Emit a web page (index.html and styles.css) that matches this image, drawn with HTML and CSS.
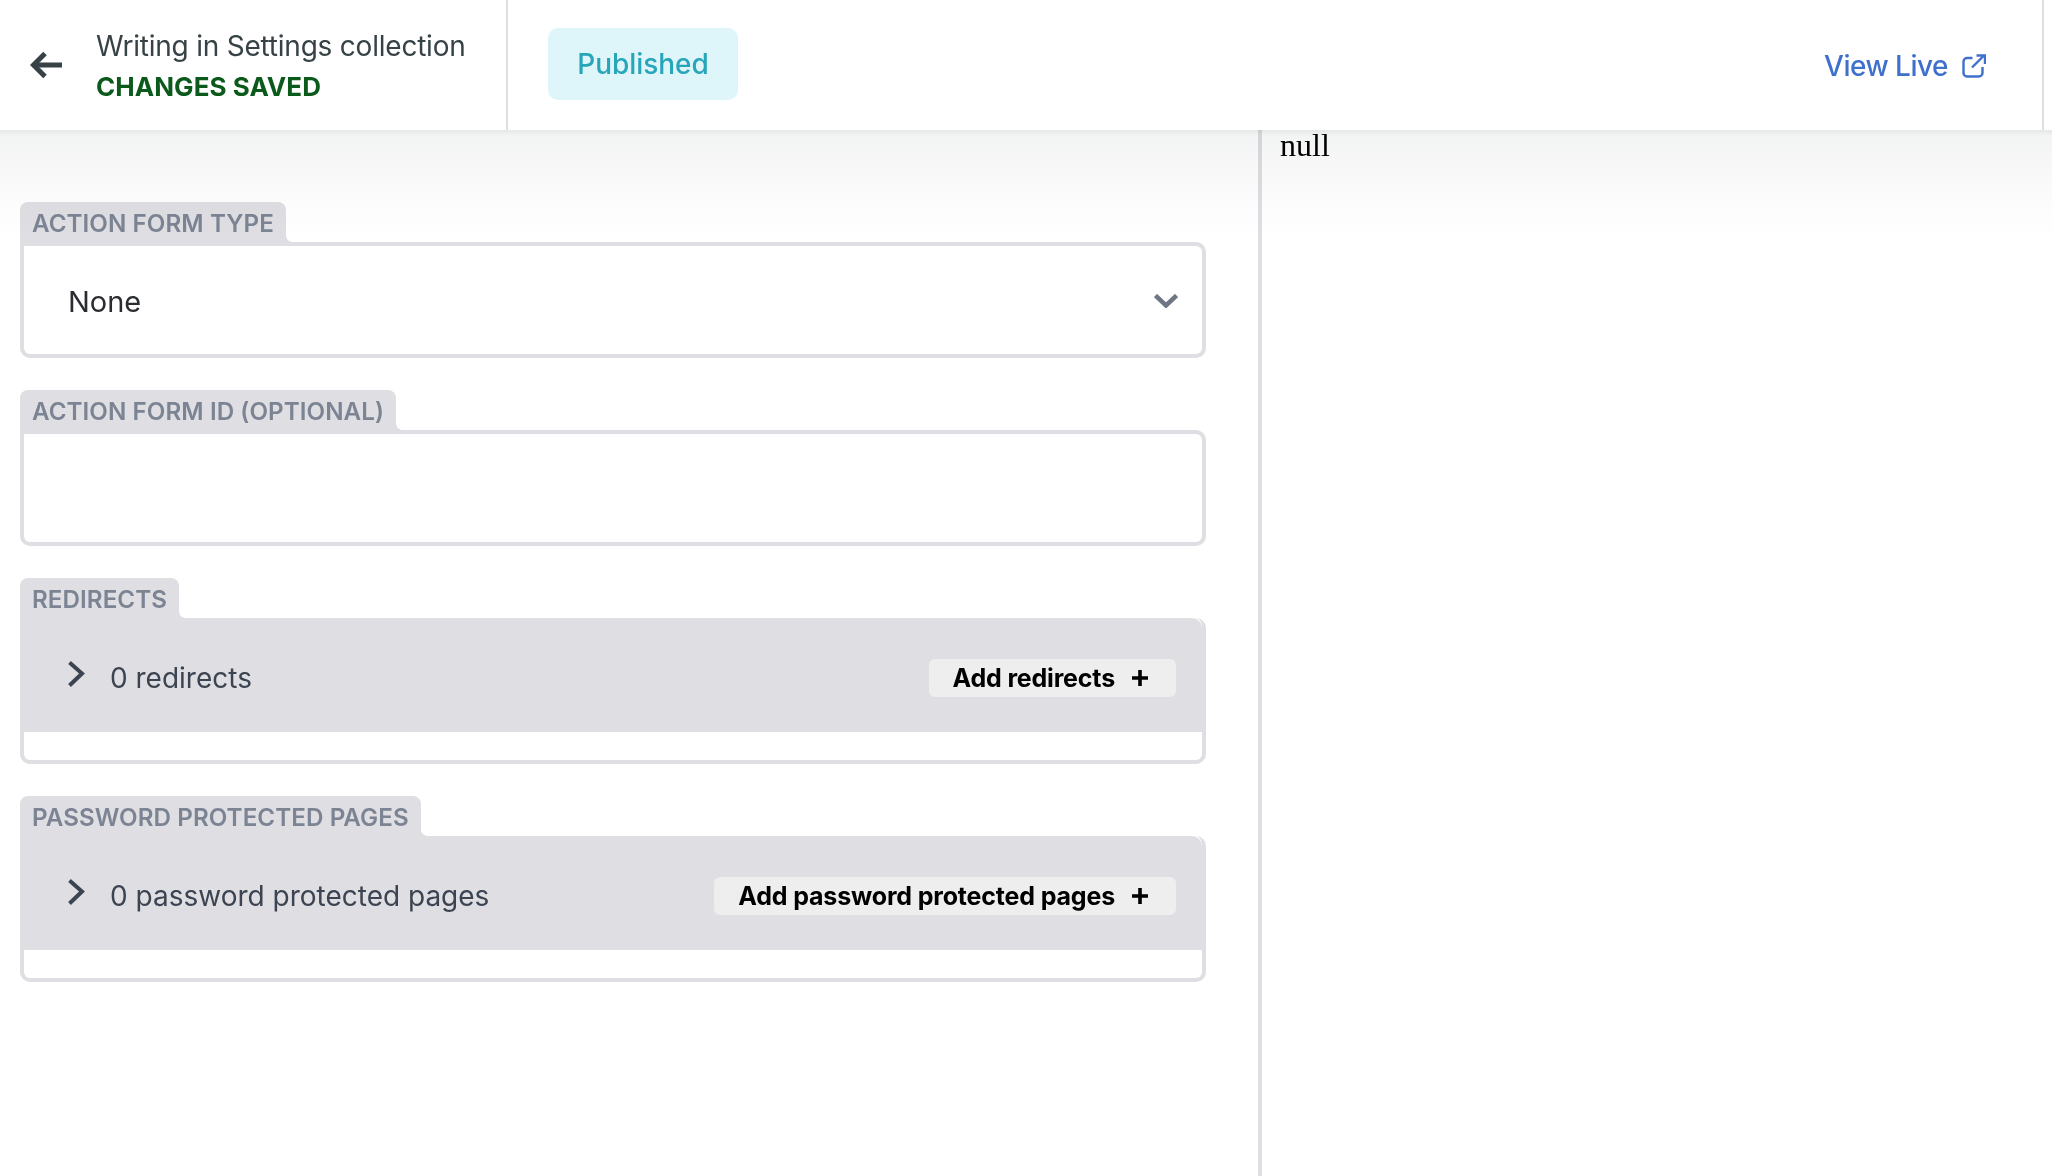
FILE: index.html
```html
<!DOCTYPE html>
<html lang="en">
<head>
<meta charset="utf-8">
<title>Writing in Settings collection</title>
<link rel="stylesheet" href="styles.css">
</head>
<body>
<header class="topbar">
  <div class="title-area">
    <svg class="back-icon" width="32" height="28" viewBox="0 0 32 28" fill="none" stroke="#374247" stroke-width="5"><path d="M32 14H4"/><path d="M15 2.500 3.500 14 15 25.500"/></svg>
    <div class="title-text">
      <div class="title">Writing in Settings collection</div>
      <div class="saved">CHANGES SAVED</div>
    </div>
  </div>
  <div class="status-area"><span class="badge">Published</span></div>
  <a class="view-live">View Live
    <svg width="24" height="24" viewBox="0 0 24 24" fill="none" stroke="#3f70cc" stroke-width="2.400"><path d="M10.500 4H5a3.500 3.500 0 0 0-3.500 3.500V19A3.500 3.500 0 0 0 5 22.500h12a3.500 3.500 0 0 0 3.500-3.500v-6"/><path d="M10 13.500 22 1.500"/><path d="M14.500 1.500H23V10"/></svg>
  </a>
</header>
<main class="main">
  <section class="form-col">
    <div class="field">
      <div class="tab">ACTION FORM TYPE</div>
      <div class="box box-select">
        <span>None</span>
        <svg width="24" height="14" viewBox="0 0 24 14" fill="none" stroke="#6e7686" stroke-width="4.500"><path d="M1.500 1.500 12 11.500 22.500 1.500"/></svg>
      </div>
    </div>
    <div class="field">
      <div class="tab">ACTION FORM ID (OPTIONAL)</div>
      <div class="box"></div>
    </div>
    <div class="field">
      <div class="tab">REDIRECTS</div>
      <div class="panel">
        <div class="panel-head">
          <svg class="chevron" width="18" height="26" viewBox="0 0 18 26" fill="none" stroke="#3c4452" stroke-width="4"><path d="M2.500 1.500 15 12.500 2.500 24.500"/></svg>
          <span class="count">0 redirects</span>
          <span class="add-btn">Add redirects
            <svg width="16" height="16" viewBox="0 0 16 16" stroke="#000" stroke-width="3.600"><path d="M8 0v16M0 8h16"/></svg>
          </span>
        </div>
      </div>
    </div>
    <div class="field">
      <div class="tab">PASSWORD PROTECTED PAGES</div>
      <div class="panel">
        <div class="panel-head">
          <svg class="chevron" width="18" height="26" viewBox="0 0 18 26" fill="none" stroke="#3c4452" stroke-width="4"><path d="M2.500 1.500 15 12.500 2.500 24.500"/></svg>
          <span class="count">0 password protected pages</span>
          <span class="add-btn">Add password protected pages
            <svg width="16" height="16" viewBox="0 0 16 16" stroke="#000" stroke-width="3.600"><path d="M8 0v16M0 8h16"/></svg>
          </span>
        </div>
      </div>
    </div>
  </section>
  <section class="preview-col">null</section>
</main>
</body>
</html>
```
FILE: styles.css
```css
* { box-sizing: border-box; }
html, body { margin: 0; height: 100%; background: #fff; }
body { font-family: Inter, "Liberation Sans", sans-serif; overflow: hidden; }

.topbar {
  position: relative;
  z-index: 2;
  height: 130px;
  display: flex;
  align-items: stretch;
  background: #fff;
  border-right: 2px solid #dfdfe3;
  margin-right: 8px;
  box-shadow: 8px 0 0 #fff;
}
.title-area {
  width: 508px;
  display: flex;
  align-items: center;
  gap: 34px;
  padding-left: 30px;
  border-right: 2px solid #dfdfe3;
}
.back-icon { flex: none; }
.title-text { padding-top: 3px; }
.title { font-size: 28px; line-height: 40px; letter-spacing: -0.22px; color: #374247; }
.saved { font-size: 26px; line-height: 41px; font-weight: 700; letter-spacing: 0.05px; color: #0b5a1c; }
.status-area { display: flex; align-items: center; padding: 0 0 2px 40px; flex: 1; }
.badge {
  display: flex;
  align-items: center;
  justify-content: center;
  width: 190px;
  height: 72px;
  border-radius: 10px;
  background: #def5f9;
  color: #27a5b9;
  font-size: 28px;
  font-weight: 500;
  letter-spacing: -0.05px;
}
.view-live {
  display: flex;
  align-items: center;
  gap: 14px;
  padding-right: 56px;
  padding-top: 2px;
  color: #3f70cc;
  font-size: 28px;
  font-weight: 500;
  letter-spacing: -0.5px;
}

.main {
  position: relative;
  display: grid;
  grid-template-columns: 1262px 1fr;
  height: 1046px;
}
.main::after {
  content: "";
  position: absolute;
  left: 0; right: 0; top: 0;
  height: 110px;
  background: linear-gradient(#e6e7e7 0, #f3f4f4 6px, #f8f8f8 40px, #fcfcfc 75px, #fff 110px);
  mix-blend-mode: multiply;
  pointer-events: none;
}
.form-col {
  display: flex;
  flex-direction: column;
  gap: 32px;
  padding: 72px 52px 0 20px;
  border-right: 4px solid #dfdfe3;
}
.preview-col {
  padding-left: 18px;
  font-family: "Liberation Serif", serif;
  font-size: 32px;
  line-height: 31px;
  color: #000;
}

.tab {
  position: relative;
  width: fit-content;
  height: 40px;
  padding: 2px 12px 0;
  display: flex;
  align-items: center;
  background: #dfdfe3;
  border-radius: 8px 8px 0 0;
  color: #7c8494;
  font-size: 24.2px;
  font-weight: 600;
  letter-spacing: 0.06px;
}
.tab::after {
  content: "";
  position: absolute;
  right: -6px;
  bottom: 0;
  width: 6px;
  height: 6px;
  background: radial-gradient(circle at 100% 0, transparent 5.500px, #dfdfe3 6px);
}
.box {
  height: 116px;
  background: #fff;
  border: 4px solid #dfdfe3;
  border-radius: 0 10px 10px 10px;
}
.box-select {
  display: flex;
  align-items: center;
  justify-content: space-between;
  padding: 2px 24px 0 44px;
  font-size: 29px;
  color: #2a2c31;
}
.panel {
  height: 146px;
  background: #fff;
  border: 4px solid #dfdfe3;
  border-top: 0;
  border-radius: 0 10px 10px 10px;
}
.panel-head {
  height: 114px;
  display: flex;
  align-items: center;
  padding: 0 26px 0 43px;
  background: #dfdfe3;
  border-top-right-radius: 10px;
}
.chevron { flex: none; margin-top: -2px; }
.count { flex: 1; margin: 6px 0 0 25px; font-size: 28px; color: #3c4452; }
.add-btn {
  display: flex;
  align-items: center;
  gap: 17px;
  height: 38px;
  margin-top: 5px;
  padding: 0 28px 0 24px;
  border-radius: 6px;
  background: #eeeeef;
  color: #000;
  font-size: 25px;
  font-weight: 700;
  letter-spacing: -0.17px;
}
```
